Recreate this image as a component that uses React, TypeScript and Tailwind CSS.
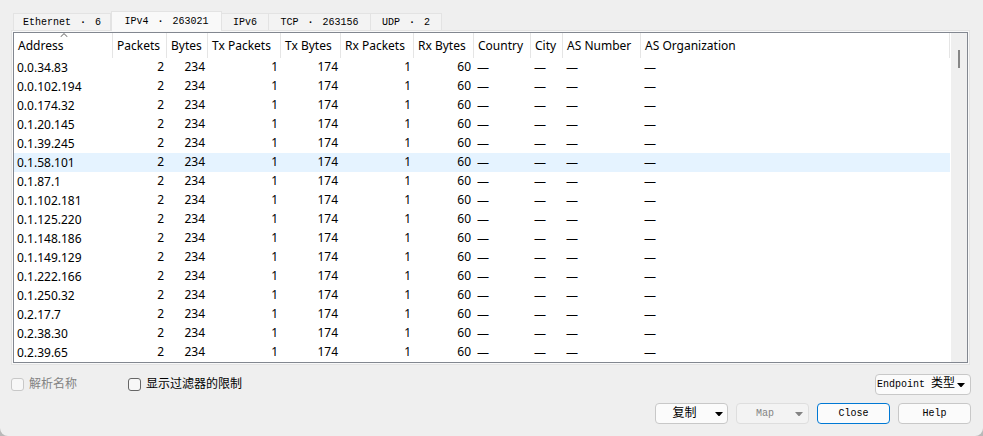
import { useState } from "react";

const mono = "font-['Liberation_Mono','Noto_Sans_CJK_SC',monospace]";
const sans = "font-['Noto_Sans','Open_Sans',sans-serif]";

const tabs = [
  { name: "Ethernet", count: "6", width: "w-[98px]" },
  { name: "IPv4", count: "263021", width: "w-[111px]" },
  { name: "IPv6", count: "", width: "w-[47px]" },
  { name: "TCP", count: "263156", width: "w-[102px]" },
  { name: "UDP", count: "2", width: "w-[71px]" },
];

const columns = [
  { title: "Address", width: "w-[99px]" },
  { title: "Packets", width: "w-[54px]" },
  { title: "Bytes", width: "w-[41px]" },
  { title: "Tx Packets", width: "w-[73px]" },
  { title: "Tx Bytes", width: "w-[60px]" },
  { title: "Rx Packets", width: "w-[73px]" },
  { title: "Rx Bytes", width: "w-[60px]" },
  { title: "Country", width: "w-[57px]" },
  { title: "City", width: "w-[32px]" },
  { title: "AS Number", width: "w-[78px]" },
  { title: "AS Organization", width: "" },
];

const addresses = [
  "0.0.34.83",
  "0.0.102.194",
  "0.0.174.32",
  "0.1.20.145",
  "0.1.39.245",
  "0.1.58.101",
  "0.1.87.1",
  "0.1.102.181",
  "0.1.125.220",
  "0.1.148.186",
  "0.1.149.129",
  "0.1.222.166",
  "0.1.250.32",
  "0.2.17.7",
  "0.2.38.30",
  "0.2.39.65",
];

const counters = ["2", "234", "1", "174", "1", "60"];
const geo = ["country", "city", "asNumber", "asOrg"];

function Arrow() {
  return (
    <svg viewBox="0 0 8 4" className="h-1 w-2 shrink-0" fill="currentColor" aria-hidden="true">
      <path d="M0 0h8L4.5 4h-1z" />
    </svg>
  );
}

const button =
  "flex h-[21px] items-center justify-center rounded border border-[#c8c8c8] bg-[#fbfbfb] text-[10px] leading-3 whitespace-pre text-black";

export default function App() {
  const [active, setActive] = useState("IPv4");
  const [hovered, setHovered] = useState("0.1.58.101");
  const [limit, setLimit] = useState(false);

  return (
    <div className="bg-[#b9b9b9]">
      <div className={`rounded-b-lg bg-[#efefef] px-3 pt-[11px] pb-3 ${mono}`}>
        {/* Tabs */}
        <div role="tablist" className="flex h-[19px] items-end pl-px">
          {tabs.map((t) => (
            <button
              key={t.name}
              role="tab"
              aria-selected={active === t.name}
              onClick={() => setActive(t.name)}
              className={`flex shrink-0 items-center justify-center border-t border-r border-[#e3e3e3] text-[10px] leading-3 text-black ${t.width} ${
                active === t.name
                  ? "relative -mb-px h-5 border-l bg-[#f9f9f9]"
                  : "h-[17px] bg-[#f3f3f3] pt-0.5 first:border-l"
              }`}
            >
              <span>{t.name}</span>
              {t.count && (
                <>
                  <span className="w-6 text-center font-bold">·</span>
                  <span>{t.count}</span>
                </>
              )}
            </button>
          ))}
        </div>

        {/* Endpoint list */}
        <div className="mr-px -ml-px border border-[#e3e3e3] bg-[#f9f9f9] p-px">
          <div className={`flex border border-[#828790] bg-white ${sans}`}>
            <table className="mr-px min-w-0 flex-1 table-fixed border-collapse text-black">
              <thead>
                <tr className="h-[25px] text-[12px] leading-4">
                  {columns.map((c, i) => (
                    <th
                      key={c.title}
                      className={`relative p-0 pl-1 text-left font-normal whitespace-nowrap shadow-[inset_-1px_0_0_#e5e5e5] ${c.width}`}
                    >
                      {i === 0 && (
                        <svg
                          viewBox="0 0 8 4"
                          className="absolute top-0 left-[46px] h-1 w-2"
                          fill="none"
                          stroke="#5c5c5c"
                          aria-hidden="true"
                        >
                          <path d="M.5 4 4 .6 7.5 4" />
                        </svg>
                      )}
                      {c.title}
                    </th>
                  ))}
                </tr>
              </thead>
              <tbody>
                {addresses.map((a) => (
                  <tr
                    key={a}
                    onMouseEnter={() => setHovered(a)}
                    className={`h-[19px] text-[12px] leading-4 ${hovered === a ? "bg-[#e5f3ff]" : ""}`}
                  >
                    <td className="p-0 pl-[3px]">{a}</td>
                    {counters.map((n, i) => (
                      <td key={i} className="p-0 pr-[3px] pb-0.5 text-right">
                        {n}
                      </td>
                    ))}
                    {geo.map((g) => (
                      <td key={g} className="p-0 pl-[3px]">
                        —
                      </td>
                    ))}
                  </tr>
                ))}
              </tbody>
            </table>
            <div className="flex w-4 justify-center bg-[#efefef] pt-[17px]">
              <div className="h-[18px] w-0.5 bg-[#868686]" />
            </div>
          </div>
        </div>

        {/* Options */}
        <div className="mt-[9px] -ml-px flex h-[21px] items-center text-[12px] leading-4">
          <label className="flex w-[117px] items-center gap-[5px] text-[#838383]">
            <input
              type="checkbox"
              disabled
              className="size-[13px] appearance-none rounded-[3px] border border-[#c8c8c8] bg-[#f7f7f7]"
            />
            解析名称
          </label>
          <label className="flex items-center gap-[5px] text-black">
            <input
              type="checkbox"
              checked={limit}
              onChange={(e) => setLimit(e.target.checked)}
              className="size-[13px] appearance-none rounded-[3px] border border-[#666] bg-[#f7f7f7] checked:bg-[#0067c0]"
            />
            显示过滤器的限制
          </label>
          <button className={`${button} ml-auto w-24 gap-0.5 pr-1`}>
            <span>
              Endpoint <span className="text-[12px]">类型</span>
            </span>
            <Arrow />
          </button>
        </div>

        {/* Actions */}
        <div className="mt-2 flex justify-end gap-2">
          <button className={`${button} w-[73px] gap-[18px] pl-3`}>
            <span className="text-[12px]">复制</span>
            <Arrow />
          </button>
          <button
            disabled
            className="flex h-[21px] w-[73px] items-center justify-center gap-[21px] rounded border border-[#dedede] bg-[#f3f3f3] pl-[14px] text-[10px] leading-3 text-[#838383]"
          >
            <span>Map</span>
            <Arrow />
          </button>
          <button className="flex h-[21px] w-[73px] items-center justify-center rounded border border-[#0078d4] bg-[#fbfbfb] text-[10px] leading-3 text-black">
            Close
          </button>
          <button className={`${button} w-[73px]`}>Help</button>
        </div>
      </div>
    </div>
  );
}
